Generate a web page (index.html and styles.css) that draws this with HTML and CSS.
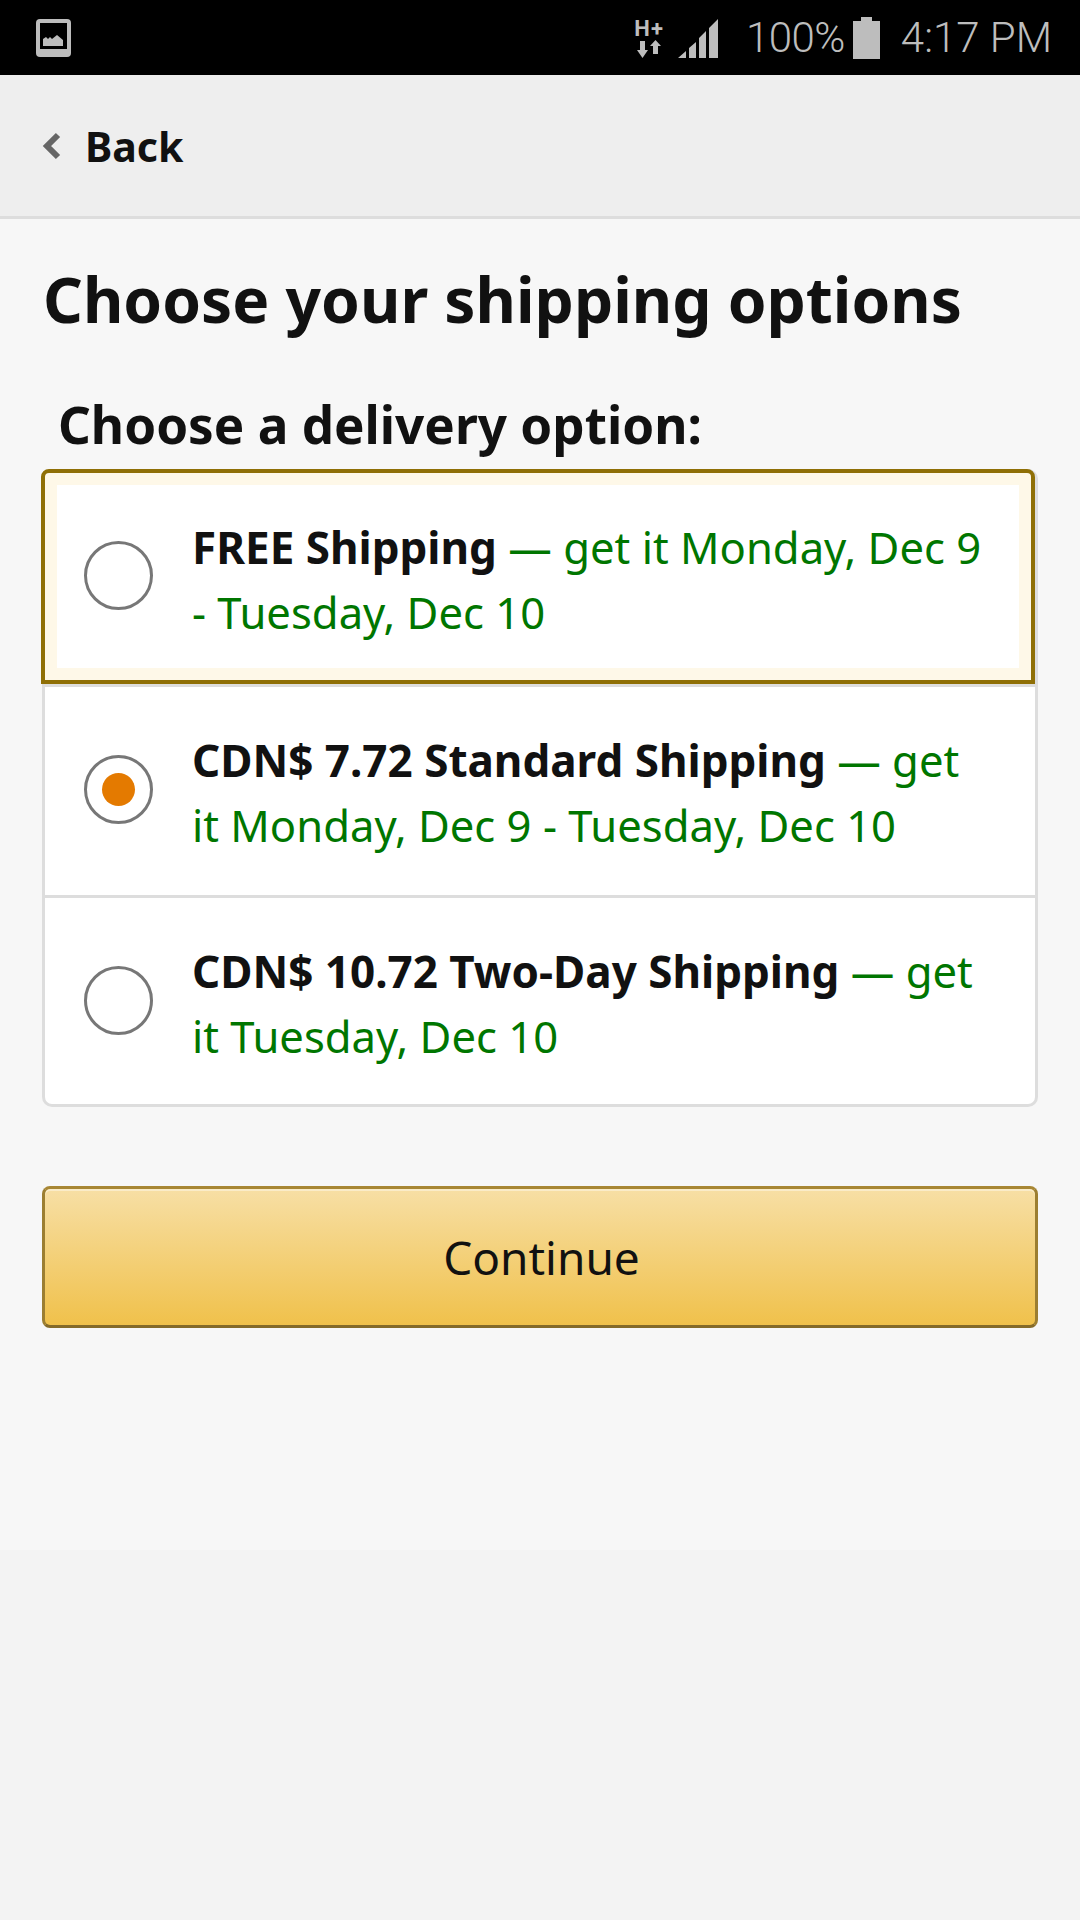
FILE: index.html
```html
<!DOCTYPE html>
<html lang="en">
<head>
    <meta charset="UTF-8">
    <meta name="viewport" content="width=device-width, initial-scale=1.0">
    <title>Choose your shipping options</title>
    <link rel="stylesheet" href="styles.css">
</head>
<body>
    <div class="status-bar">
        <svg class="icon-gallery" width="35" height="38" viewBox="0 0 35 38">
            <rect x="0" y="0" width="35" height="38" rx="4" fill="#bdbdbd"/>
            <rect x="4" y="4" width="27" height="26" fill="#000"/>
            <path d="M7 27V20L10 18L12 20L14 18L16 20L21 16L27 21V27Z" fill="#bdbdbd"/>
        </svg>
        <div class="status-right">
            <div class="network">
                <span class="network-type">H+</span>
                <svg width="24" height="18" viewBox="0 0 24 18">
                    <path d="M3 1H8V10H11L5.500 18L0 10H3Z M16 14H21V6H24L18.500 0L13 6H16Z" fill="#bdbdbd"/>
                </svg>
            </div>
            <svg class="icon-signal" width="40" height="40" viewBox="0 0 40 40">
                <path d="M0 40L8 33V40Z M11 30L18 24V40H11Z M21 20L28 13V40H21Z M31 10L40 1V40H31Z" fill="#bdbdbd"/>
            </svg>
            <span class="battery-text">100%</span>
            <svg class="icon-battery" width="27" height="42" viewBox="0 0 27 42">
                <path d="M8 0H19V4H27V42H0V4H8Z" fill="#bdbdbd"/>
            </svg>
            <span class="clock">4:17 PM</span>
        </div>
    </div>

    <div class="back-bar">
        <svg width="20" height="28" viewBox="0 0 20 28">
            <path d="M17 3L6 14L17 25" fill="none" stroke="#666" stroke-width="6"/>
        </svg>
        <span class="back-text">Back</span>
    </div>

    <div class="main">
        <h1>Choose your shipping options</h1>
        <h2>Choose a delivery option:</h2>

        <div class="options">
            <div class="option selected">
                <div class="option-inner">
                    <span class="radio"></span>
                    <p class="option-text"><b>FREE Shipping</b> — get it Monday, Dec 9 - Tuesday, Dec 10</p>
                </div>
            </div>
            <div class="option">
                <div class="option-inner">
                    <span class="radio checked"></span>
                    <p class="option-text"><b>CDN$ 7.72 Standard Shipping</b> — get it Monday, Dec 9 - Tuesday, Dec 10</p>
                </div>
            </div>
            <div class="option last">
                <div class="option-inner">
                    <span class="radio"></span>
                    <p class="option-text"><b>CDN$ 10.72 Two-Day Shipping</b> — get it Tuesday, Dec 10</p>
                </div>
            </div>
        </div>

        <button class="continue">Continue</button>
    </div>
</body>
</html>
```

FILE: styles.css
```css
html, body {
    margin: 0;
    padding: 0;
}
body {
    width: 1080px;
    height: 1920px;
    background-color: #f3f3f3;
    font-family: "Noto Sans", Arial, sans-serif;
    color: #111;
    overflow: hidden;
}
.status-bar {
    height: 75px;
    background: #000;
    display: flex;
    align-items: center;
    justify-content: space-between;
    padding: 0 28px 0 36px;
    box-sizing: border-box;
}
.status-right {
    display: flex;
    align-items: center;
    font-family: Roboto, sans-serif;
    font-weight: 300;
    color: #bdbdbd;
}
.network {
    display: flex;
    flex-direction: column;
    align-items: center;
    margin-right: 14px;
}
.network-type {
    font-size: 22px;
    line-height: 23px;
    font-weight: 700;
    letter-spacing: 1px;
}
.icon-signal {
    margin-right: 28px;
}
.battery-text {
    font-size: 42px;
    letter-spacing: -0.5px;
}
.icon-battery {
    margin: 0 21px 0 8px;
}
.clock {
    font-size: 42px;
}
.back-bar {
    height: 141px;
    background: #eee;
    border-bottom: 3px solid #ddd;
    display: flex;
    align-items: center;
    padding-left: 41px;
    gap: 24px;
}
.back-text {
    font-size: 41px;
    font-weight: 700;
}
.main {
    height: 1331px;
    background: #f7f7f7;
    padding: 38px 42px 0;
    box-sizing: border-box;
}
h1 {
    margin: 0 0 0 1px;
    font-size: 62.2px;
    line-height: 84px;
    font-weight: 700;
}
h2 {
    margin: 48px 0 0 16px;
    font-size: 51.2px;
    line-height: 70px;
    font-weight: 700;
}
.options {
    margin-top: 10px;
    background: #fff;
    border: 3px solid #ddd;
    border-radius: 10px;
}
.option {
    height: 208px;
    border-top: 3px solid #ddd;
}
.option.last {
    height: 206px;
}
.option-inner {
    display: flex;
    align-items: flex-start;
    padding: 41px 0 0 39px;
    gap: 39px;
}
.option.selected {
    height: 215px;
    margin: -3px 0 0 -4px;
    box-sizing: border-box;
    border: 4px solid #8f6f05;
    border-radius: 8px 8px 0 0;
    background: #fff;
    padding: 12px;
    box-shadow: inset 0 0 0 12px #fef8e8;
}
.option.selected .option-inner {
    padding: 30px 0 0 27px;
}
.radio {
    flex: none;
    width: 69px;
    height: 69px;
    margin-top: 27px;
    box-sizing: border-box;
    border: 3px solid #777;
    border-radius: 50%;
    background: #fff;
    display: flex;
    align-items: center;
    justify-content: center;
}
.selected .radio {
    margin-top: 26px;
}
.radio.checked::after {
    content: "";
    width: 33px;
    height: 33px;
    border-radius: 50%;
    background: #e47a00;
}
.option-text {
    margin: 0;
    width: 793px;
    font-size: 43.6px;
    line-height: 65px;
    color: #007600;
}
.option-text b {
    font-size: 44px;
    color: #111;
}
.continue {
    display: block;
    width: 100%;
    height: 142px;
    margin-top: 79px;
    padding-left: 9px;
    border: 3px solid;
    border-color: #a88734 #9c7e31 #846a29;
    border-radius: 8px;
    background: linear-gradient(to bottom, #f7dfa5, #f0c14b);
    box-shadow: inset 0 2px 0 rgba(255, 255, 255, 0.4);
    font-family: "Noto Sans", Arial, sans-serif;
    font-size: 46px;
    color: #111;
}
```
